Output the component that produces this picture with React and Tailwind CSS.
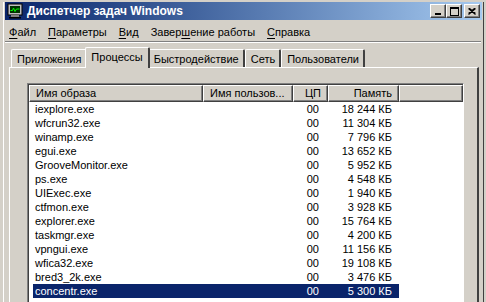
import React from 'react';

const processes = [
  ['iexplore.exe', '18 244 КБ'],
  ['wfcrun32.exe', '11 304 КБ'],
  ['winamp.exe', '7 796 КБ'],
  ['egui.exe', '13 652 КБ'],
  ['GrooveMonitor.exe', '5 952 КБ'],
  ['ps.exe', '4 548 КБ'],
  ['UIExec.exe', '1 940 КБ'],
  ['ctfmon.exe', '3 928 КБ'],
  ['explorer.exe', '15 764 КБ'],
  ['taskmgr.exe', '4 200 КБ'],
  ['vpngui.exe', '11 156 КБ'],
  ['wfica32.exe', '19 108 КБ'],
  ['bred3_2k.exe', '3 476 КБ'],
  ['concentr.exe', '5 300 КБ'],
];

const raised =
  'border-t border-l border-t-white border-l-white border-r border-b border-r-[#404040] border-b-[#404040] shadow-[inset_-1px_-1px_0_#808080]';

const TitleButton = ({ children }) => (
  <div className={`w-[16px] h-[14px] bg-[#d4d0c8] flex items-center justify-center ${raised}`}>
    {children}
  </div>
);

const MenuItem = ({ pre, u, post }) => (
  <span className="px-[6px] whitespace-nowrap">
    {pre}
    <span className="underline underline-offset-2">{u}</span>
    {post}
  </span>
);

const Tab = ({ label, active }) =>
  active ? (
    <div className="relative z-10 -mx-[2px] -mb-[1px] h-[21px] pl-[5px] pr-[5px] pb-[2px] bg-[#d4d0c8] border-t border-l border-white border-r-[2px] border-r-[#404040] rounded-t-[2px] flex items-center whitespace-nowrap">
      {label}
    </div>
  ) : (
    <div className="h-[18px] pl-[5px] pr-[4px] pt-[1px] border-t border-l border-white border-r-[2px] border-r-[#404040] rounded-t-[2px] flex items-center whitespace-nowrap">
      {label}
    </div>
  );

const HeaderCell = ({ w, children, right }) => (
  <div
    className={`h-[17px] shrink-0 flex items-center px-[6px] whitespace-nowrap overflow-hidden ${right ? 'justify-end' : ''} ${raised} ${w}`}
  >
    {children}
  </div>
);

export default function App() {
  return (
    <div
      className="w-[486px] h-[302px] overflow-hidden bg-[#d4d0c8] text-black text-[11px] leading-none pt-[2px] pl-[3px] pr-[2px]"
      style={{ fontFamily: '"Liberation Sans", Arial, sans-serif' }}
    >
      <div className="border-l border-white pl-[1px] pr-[1px] border-r border-r-[#404040] h-full">
        {/* Title bar */}
        <div className="h-[18px] flex items-center pl-[2px] pr-[2px] bg-gradient-to-r from-[#0a246a] to-[#a6caf0]">
          <svg width="16" height="16" viewBox="0 0 16 16" className="shrink-0">
            <rect x="1" y="1" width="14" height="11" fill="#c0c0c0" stroke="#000" strokeWidth="1" />
            <rect x="3" y="3" width="10" height="7" fill="#003300" />
            <polyline points="3.5,7.5 5.5,7.5 6.5,5 8,8.5 9.5,6 12.5,6" fill="none" stroke="#00ff00" strokeWidth="1" />
            <rect x="4" y="12" width="8" height="2" fill="#808080" />
            <rect x="2" y="14" width="12" height="1.5" fill="#000" />
          </svg>
          <div className="ml-[4px] font-bold text-white text-[12px]">Диспетчер задач Windows</div>
          <div className="ml-auto flex items-center">
            <TitleButton>
              <svg width="8" height="8" viewBox="0 0 8 8">
                <rect x="1" y="6" width="6" height="2" fill="#000" />
              </svg>
            </TitleButton>
            <TitleButton>
              <svg width="9" height="9" viewBox="0 0 9 9">
                <rect x="0.5" y="0.5" width="8" height="8" fill="none" stroke="#000" />
                <rect x="0" y="0" width="9" height="2" fill="#000" />
              </svg>
            </TitleButton>
            <div className="ml-[2px]">
              <TitleButton>
                <svg width="8" height="7" viewBox="0 0 8 7">
                  <path d="M0.5 0.5 L7.5 6.5 M7.5 0.5 L0.5 6.5 M1.5 0.5 L7.5 5.5 M6.5 0.5 L0.5 5.5" stroke="#000" strokeWidth="1.2" fill="none" />
                </svg>
              </TitleButton>
            </div>
          </div>
        </div>

        {/* Menu bar */}
        <div className="h-[21px] flex items-center pt-[3px] -ml-[2px]">
          <MenuItem u="Ф" post="айл" />
          <MenuItem u="П" post="араметры" />
          <MenuItem u="В" post="ид" />
          <MenuItem pre="Завер" u="ш" post="ение работы" />
          <MenuItem u="С" post="правка" />
        </div>
        <div className="h-[2px] border-t border-[#808080] border-b border-b-white mr-[1px]" />

        {/* Tabs */}
        <div className="pl-[4px] pr-[3px] pt-[4px]">
          <div className="flex items-end pl-[2px] h-[20px]">
            <Tab label="Приложения" />
            <Tab label="Процессы" active />
            <Tab label="Быстродействие" />
            <Tab label="Сеть" />
            <Tab label="Пользователи" />
          </div>

          {/* Panel */}
          <div className="h-[240px] border-t border-l border-white border-r-[2px] border-r-[#404040] pt-[15px] pl-[17px] pr-[13px]">
            <div className="h-[230px] border-t border-l border-[#808080] border-r border-b border-r-white border-b-white">
              <div className="h-full border-t border-l border-[#404040] bg-white overflow-hidden">
                <div className="flex bg-[#d4d0c8]">
                  <HeaderCell w="w-[174px]">Имя образа</HeaderCell>
                  <HeaderCell w="w-[90px]">Имя пользов...</HeaderCell>
                  <HeaderCell w="w-[35px]" right>ЦП</HeaderCell>
                  <HeaderCell w="w-[71px]" right>Память</HeaderCell>
                  <HeaderCell w="flex-1" />
                </div>
                {processes.map(([name, mem], i) => {
                  const sel = name === 'concentr.exe';
                  return (
                    <div key={i} className="flex h-[14px] leading-[14px]">
                      <div className={`ml-[4px] w-[366px] flex h-full ${sel ? 'bg-[#0a246a] text-white' : ''}`}>
                        <div className="w-[170px] pl-[2px] whitespace-nowrap">{name}</div>
                        <div className="w-[90px]" />
                        <div className="w-[35px] text-right pr-[9px]">00</div>
                        <div className="w-[71px] text-right pr-[7px] whitespace-nowrap">{mem}</div>
                      </div>
                    </div>
                  );
                })}
              </div>
            </div>
          </div>
        </div>
      </div>
    </div>
  );
}
